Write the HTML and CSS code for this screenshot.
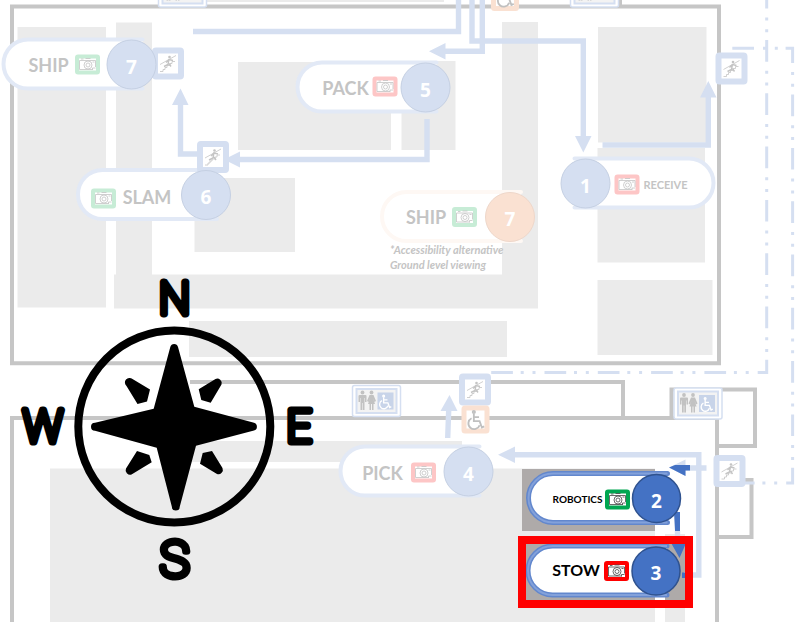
FILE: index.html
```html
<!DOCTYPE html>
<html lang="en">
<head>
<meta charset="utf-8">
<title>Tour route map</title>
<link rel="stylesheet" href="styles.css">
</head>
<body>
<main>
<svg class="map" viewBox="0 0 808 622" role="img" aria-label="Facility tour route map">
  <defs>
    <path id="pill" d="M11 -25H-103.500a24.500 24.500 0 0 0 0 49H11"/>
    <g id="camera">
      <rect class="frame" x="-10.500" y="-8" width="21" height="16" rx="1"/>
      <g class="ink">
        <path d="M-8 -4H8M-8 -4V5H5M8 -4V2.500M-6.500 -5.500H-4M-2 -6H3"/>
        <circle cx="0.500" cy="0.500" r="4"/><circle cx="0.500" cy="0.500" r="2"/>
        <path d="M5 5.500V3.500H8M5 -2.500H7"/>
      </g>
    </g>
    <g id="stairs">
      <rect class="sign" x="-13" y="-13" width="26" height="26" rx="1"/>
      <path class="ink" d="M-8 8H-5V6H-3V4H-1V2H2V0H4V-2H7M-8 1L8 -8"/>
      <circle class="solid" cx="1.500" cy="-6.500" r="1.300"/>
      <path class="body" d="M1 -4.500L0 1L-4 3M1 0L3 3M-2 -1L1 -4L5 -3"/>
    </g>
    <g id="chair" class="line">
      <circle cx="-1" cy="-7" r="1"/>
      <path d="M-1 -5.500V1H4L6 6.500L8 5.500M-1 -2.500H3.500M-3 -1.500A5 5 0 1 0 4 4.500"/>
    </g>
    <g id="restroom">
      <rect class="plate-outer" x="-24" y="-15.500" width="48" height="31" rx="2"/>
      <rect class="plate" x="-20" y="-12" width="40" height="24"/>
      <circle class="person" cx="-14" cy="-8.500" r="1.900"/>
      <path class="person" d="M-17 -6H-11Q-10 -6 -10 -5V1H-11.500V-3H-12V9H-13.700V2H-14.300V9H-16V-3H-16.500V1H-18V-5Q-18 -6 -17 -6Z"/>
      <circle class="person" cx="-5" cy="-8.500" r="1.900"/>
      <path class="person" d="M-7 -6H-3L-0.500 0L-2 1L-3.500 -3L-1.500 3H-3V9H-4.500V3H-5.500V9H-7V3H-8.500L-6.500 -3L-8 1L-9.500 0Z"/>
      <rect class="tile" x="1" y="-8.500" width="16" height="17"/>
      <use href="#chair" class="white-chair" transform="translate(8 1) scale(.85)"/>
    </g>
  </defs>

  <g class="zone">
    <path d="M17.500 27H106V307.500H17.500ZM116 22.500H152V275H116ZM114 274.500H502V22H538V308.500H114ZM238 62H391V150H238ZM401.500 61H455.500V150H401.500ZM194.500 178H295V252H194.500ZM189 321H507V357H189ZM598 27H706.500V142.500H598ZM597.500 148H705V262.500H597.500ZM597.500 280H712.500V355H597.500ZM202 0H444V2H202ZM190 441H462V462H190ZM50 468.500H655V622H50ZM665 534H685V622H665Z"/>
  </g>
  <path class="zone-active" d="M522 469H655V531H522ZM526 544H655V600H526ZM665 544H685V600H665Z"/>

  <g class="wall">
    <path d="M12 6.500H719V363.300H12ZM190 382H623V418M12 622V418H717V622M671.500 418V389.500H755V446H717M717 480H751.500V537H717M620 0V6"/>
  </g>

  <g class="dashes">
    <path d="M766.700 -13.300V372.500H490"/>
    <path d="M732.300 48.300H792.600V483H745"/>
  </g>

  <g class="route">
    <path d="M193 31.500H458.500V0M472 0V41H583.300V137M482.300 0V51.300H445M427 119V159.500H239M197 154H180.500V104M602.500 145H708.300V96M447.700 438L448.700 410M514 454.700H698.800V575H684M706.500 468H684M677.500 531V545"/>
  </g>
  <path class="head" d="M583.300 152.500L575 136H591.500ZM429 51.300L445.500 43V59.500ZM224 159.500L240 151.500V167.500ZM180.500 88.500L172 105H188.500ZM708.300 81L700 97.500H716.500ZM449.500 395L440.500 411H457.500ZM498 454.700L515 446.500V463ZM669 467.500L685.500 459.500V476Z"/>
  <path class="head-active" d="M669 467.500L675 465H690V470.500H685.500V476ZM674 512H680V531H675ZM670 541H687L679.500 558ZM682 572.500H686V578H682Z"/>

  <g class="step green" transform="translate(131.500 64.500)">
    <use href="#stairs" class="blue-sign" x="36.500" y="-1"/>
    <use href="#pill" class="pill"/>
    <circle r="24.500"/><text class="number" x="0" y="9">7</text>
    <text class="label" x="-83" y="7">SHIP</text><use href="#camera" x="-44"/>
  </g>
  <g class="step green" transform="translate(206 195)">
    <use href="#pill" class="pill"/>
    <use href="#stairs" class="blue-sign" x="7" y="-38"/>
    <circle r="24.500"/><text class="number" y="9">6</text>
    <text class="label" x="-59" y="9">SLAM</text><use href="#camera" x="-102.500" y="3.500"/>
  </g>
  <g class="step red" transform="translate(425.500 87.500)">
    <use href="#pill" class="pill"/>
    <circle r="24.500"/><text class="number" y="9">5</text>
    <text class="label" x="-80" y="7">PACK</text><use href="#camera" x="-40.500" y="-1"/>
  </g>
  <g class="step green orange" transform="translate(510 217)">
    <use href="#pill" class="pill"/>
    <circle r="24.500"/><text class="number" y="9">7</text>
    <text class="label" x="-84" y="7">SHIP</text><use href="#camera" x="-45.500"/>
  </g>
  <g class="step red" transform="translate(585.500 183.500)">
    <use href="#pill" class="pill" transform="scale(-1 1)"/>
    <circle r="24.500"/><text class="number" y="9">1</text>
    <text class="label small" x="80" y="5">RECEIVE</text><use href="#camera" x="41.500" y="1"/>
  </g>
  <g class="step red" transform="translate(468.500 471.500)">
    <use href="#pill" class="pill"/>
    <circle r="24.500"/><text class="number" y="9">4</text>
    <text class="label" x="-86" y="8">PICK</text><use href="#camera" x="-45" y="1"/>
  </g>
  <g class="step active green" transform="translate(656.500 498.500)">
    <use href="#pill" class="pill"/><use href="#pill" class="sheen"/>
    <circle r="24"/><text class="number" y="9">2</text>
    <text class="label tiny" x="-79" y="4">ROBOTICS</text><use href="#camera" x="-39" y="1"/>
  </g>
  <g class="step active red" transform="translate(656 571)">
    <use href="#pill" class="pill"/><use href="#pill" class="sheen"/>
    <circle r="24"/><text class="number" y="9">3</text>
    <text class="label medium" x="-80" y="5">STOW</text><use href="#camera" x="-39.500"/>
  </g>

  <text class="note"><tspan x="390" y="254">*Accessibility alternative</tspan><tspan x="390" y="269">Ground level viewing</tspan></text>

  <use href="#stairs" class="blue-sign" x="731.500" y="68.500"/>
  <use href="#stairs" class="blue-sign" x="475" y="389.500"/>
  <use href="#stairs" class="blue-sign" x="729.500" y="471"/>
  <g class="access">
    <rect x="464" y="408" width="23" height="23" rx="1"/><use href="#chair" transform="translate(475 420) scale(1.150)"/>
    <rect x="493.500" y="-14.500" width="23" height="23" rx="1"/><use href="#chair" transform="translate(504.500 -2.500) scale(1.150)"/>
  </g>
  <use href="#restroom" x="376.500" y="401"/>
  <use href="#restroom" x="698" y="403.500"/>
  <use href="#restroom" x="182.500" y="-8.500"/>
  <use href="#restroom" x="594.500" y="-8.500"/>

  <rect class="highlight" x="522" y="540" width="167" height="64"/>

  <g class="compass">
    <circle cx="174.300" cy="426.500" r="96"/>
    <path d="M170.300 347A4 4 0 0 1 178 347L194.300 406.700L254 422.800A4 4 0 0 1 254 430.500L196 445.700L179.800 506.500A4 4 0 0 1 171.800 506.500L156.700 447.700L95 430.800A4 4 0 0 1 95 422.800L153.700 408.700Z"/>
    <path d="M132.500 379L150 389.500L147 401.500L137.500 404L126.500 386A4.500 4.500 0 0 1 132.500 379ZM215.500 379L198.700 389.300L201.300 400L210.700 402.700L221.500 384.500A4.500 4.500 0 0 0 215.500 379ZM137 451L149.300 455L151.700 462.300L131.500 474.500A4.500 4.500 0 0 1 126 468.500ZM212 451L202.700 453L200 463.700L217 474A4.500 4.500 0 0 0 222.500 468Z"/>
    <text x="174.500" y="314">N</text>
    <text class="south" x="174.500" y="577">S</text>
    <text x="43" y="442">W</text>
    <text x="299" y="442">E</text>
  </g>
</svg>
</main>
</body>
</html>
```
FILE: styles.css
```css
body {
  margin: 0;
  background: #fff;
}

.map {
  display: block;
  width: 100%;
  height: auto;
  font-family: Lato, "Open Sans", sans-serif;
}

.zone { fill: #ebebeb; }
.zone-active { fill: #aeaaa9; }
.wall { fill: none; stroke: #c6c6c6; stroke-width: 4; }

.route { fill: none; stroke: #d5dff1; stroke-width: 5.4; }
.head { fill: #d5dff1; }
.head-active { fill: #4472c4; }
.dashes {
  fill: none;
  stroke: #d5dff1;
  stroke-width: 3;
  stroke-dasharray: 21.7 9 3 8.800 3 7.800;
}

/* Route stops */
.green { --frame: #c7ecd6; }
.red { --frame: #fdc6c6; }
.active { --ink: #444; }
.active.green { --frame: #00a651; }
.active.red { --frame: #f00; }

.pill { fill: #fff; stroke: #e2e9f6; stroke-width: 4; stroke-linecap: round; }
.sheen { fill: none; stroke: #83a1da; stroke-width: 2; }
.active .pill { stroke: #6287cd; stroke-width: 5; }
.orange .pill { stroke: #fef8f4; }
.step > circle { fill: #d5dff1; stroke: #c5d0e3; stroke-width: 1; }
.orange > circle { fill: #fae1d2; stroke: #eed7ca; }
.active > circle { fill: #4472c4; stroke: #2f528f; stroke-width: 1.5; }

.label { font-size: 18px; font-weight: 700; text-anchor: middle; fill: #c4c4c4; }
.label.medium { font-size: 16px; }
.label.small { font-size: 11px; }
.label.tiny { font-size: 10px; }
.active .label { fill: #000; }
.number {
  font-family: "Open Sans", sans-serif;
  font-size: 19px;
  font-weight: 700;
  text-anchor: middle;
  fill: #fff;
}
.note { font-size: 11px; font-style: italic; font-weight: 700; fill: #c4c4c4; }

/* Signs */
.frame { fill: #fff; stroke: var(--frame); stroke-width: 4; }
.active .frame { stroke-width: 3; }
.ink { fill: none; stroke: var(--ink, #c4c4c4); stroke-width: 0.8; }
.solid { fill: #c4c4c4; }
.body { fill: none; stroke: #c4c4c4; stroke-width: 1.4; }
.sign { fill: #fff; stroke: #d5dff1; stroke-width: 6; }

.line { fill: none; stroke: var(--chair, #c0c0c0); stroke-width: 1.6; }
.white-chair { --chair: #fff; }
.access rect { fill: #fff; stroke: #fae1d2; stroke-width: 5; }
.plate-outer { fill: #fff; stroke: #d5dff1; stroke-width: 1.5; }
.plate { fill: #f3f3f3; stroke: #d5dff1; stroke-width: 2; }
.person { fill: #c2c2c2; }
.tile { fill: #c8d4e9; }

.highlight { fill: none; stroke: #f00; stroke-width: 8; }

.compass { fill: #000; }
.compass circle { fill: none; stroke: #000; stroke-width: 8; }
.compass text {
  font-family: Roboto, sans-serif;
  font-size: 44px;
  font-weight: 100;
  stroke: #000;
  stroke-width: 7;
  stroke-linejoin: round;
  text-anchor: middle;
}
.compass .south { font-size: 50px; }
```
